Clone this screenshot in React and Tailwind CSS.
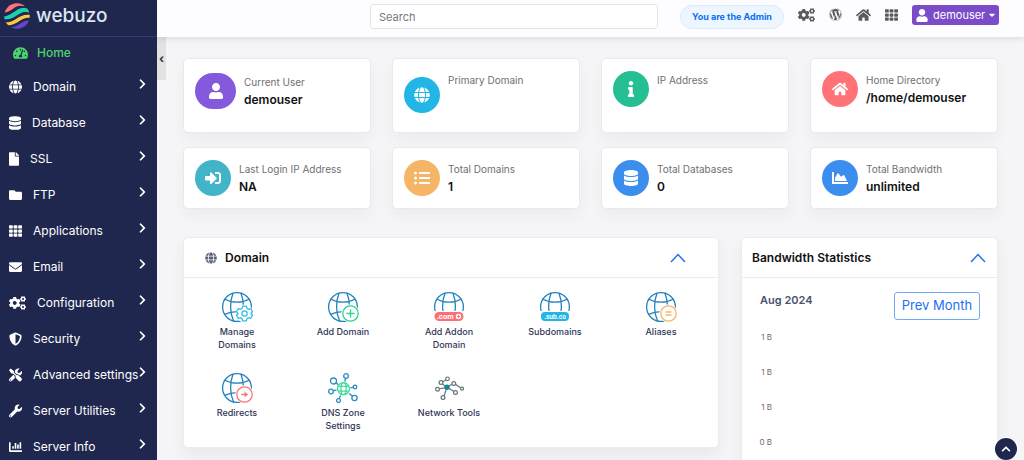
import React from "react";
import {
  FaTachometerAlt,
  FaGlobe,
  FaDatabase,
  FaFile,
  FaFolder,
  FaTh,
  FaEnvelope,
  FaCogs,
  FaShieldAlt,
  FaTools,
  FaWrench,
  FaChartBar,
  FaChevronRight,
  FaChevronUp,
  FaWordpress,
  FaHome,
  FaUser,
  FaInfo,
  FaSignInAlt,
  FaListUl,
  FaChartArea,
  FaCaretDown,
} from "react-icons/fa";

const menu = [
  { label: "Domain", Icon: FaGlobe, width: "w-[13px]" },
  { label: "Database", Icon: FaDatabase, width: "w-3" },
  { label: "SSL", Icon: FaFile, width: "w-2.5" },
  { label: "FTP", Icon: FaFolder, width: "w-[13px]" },
  { label: "Applications", Icon: FaTh, width: "w-[13px]" },
  { label: "Email", Icon: FaEnvelope, width: "w-[13px]" },
  { label: "Configuration", Icon: FaCogs, width: "w-[17px]" },
  { label: "Security", Icon: FaShieldAlt, width: "w-[13px]" },
  { label: "Advanced settings", Icon: FaTools, width: "w-[13px]" },
  { label: "Server Utilities", Icon: FaWrench, width: "w-[13px]" },
  { label: "Server Info", Icon: FaChartBar, width: "w-[13px]" },
];

const stats = [
  { label: "Current User", value: "demouser", Icon: FaUser, card: "pt-[14px]", badge: "w-[41px] bg-[#8459dc]" },
  { label: "Primary Domain", value: "", Icon: FaGlobe, card: "pt-3", badge: "mt-1.5 w-9 bg-[#22b6e6]" },
  { label: "IP Address", value: "", Icon: FaInfo, card: "pt-3", badge: "w-9 bg-[#26bf94]" },
  { label: "Home Directory", value: "/home/demouser", Icon: FaHome, card: "pt-3", badge: "w-9 bg-[#ff7378]" },
  { label: "Last Login IP Address", value: "NA", Icon: FaSignInAlt, card: "pt-3", badge: "w-9 bg-[#41b4c8]" },
  { label: "Total Domains", value: "1", Icon: FaListUl, card: "pt-3", badge: "w-9 bg-[#f4b566]" },
  { label: "Total Databases", value: "0", Icon: FaDatabase, card: "pt-3", badge: "w-9 bg-[#3b8eed]" },
  { label: "Total Bandwidth", value: "unlimited", Icon: FaChartArea, card: "pt-3", badge: "w-9 bg-[#3b8eed]" },
];

function Logo() {
  return (
    <svg viewBox="0 0 26 26" className="size-[26px]" fill="none" aria-hidden="true">
      <defs>
        <clipPath id="logo-disc">
          <circle cx="13" cy="13" r="12.8" />
        </clipPath>
      </defs>
      <g clipPath="url(#logo-disc)">
        <path d="M0 9.500C6 9 8.500 5.800 12 3.800C15 2.200 18 2.600 21 3.400L16 -1H4Z" fill="#f9767b" />
        <path d="M-1 13.500C5 13 9 9.500 13 7C17 4.600 21 4.400 26 6.500V10C20 7.600 17 9.600 13.500 12C9 15 5 17.300 -1 16Z" fill="#1fd1ab" />
        <path d="M0 19.500C6 19.600 10 17.500 13.500 15C17.500 12.300 21 11 27 12V15C22 14 19 15.600 15.500 18C11 21 7 23 1 22Z" fill="#fdc640" />
        <path d="M4 24.500C9 24.600 13 22.700 16.500 20.400C19.500 18.500 22 17.300 26 17.600L22 27H6Z" fill="#6445cd" />
      </g>
    </svg>
  );
}

function Globe({ children }) {
  return (
    <svg viewBox="0 0 30 30" className="size-[30px] overflow-visible" fill="none" strokeLinecap="round" aria-hidden="true">
      <g stroke="#2383bd" strokeWidth="1.300">
        <circle cx="15" cy="15" r="14.400" />
        <path d="M11 1.300C7.700 9.500 7.700 20.500 11.500 28.800M19 1.300C22.300 9.500 22.300 20.500 18.500 28.800" />
        <path d="M3 7.200C10 11.200 20 11.200 27 7.200M2.700 22.400C10 18.800 20 18.800 27.300 22.400" />
      </g>
      {children}
    </svg>
  );
}

function RoundBadge({ color, children }) {
  return (
    <g>
      <circle cx="22.500" cy="21.500" r="9.300" fill="#fff" />
      <circle cx="22.500" cy="21.500" r="7.700" stroke={color} strokeWidth="1.300" />
      <g stroke={color} strokeWidth="1.300">{children}</g>
    </g>
  );
}

function ManageIcon() {
  return (
    <Globe>
      <circle cx="22.500" cy="21.500" r="9" fill="#fff" />
      <g stroke="#35bde8" strokeWidth="1.300" strokeLinejoin="round">
        <path d="M20.700 14.200h3.600l.7 2.200 1.500.9 2.300-.6 1.700 3-1.600 1.800 1.600 1.800-1.700 3-2.300-.6-1.500.9-.7 2.200h-3.600l-.7-2.200-1.500-.9-2.300.6-1.700-3 1.600-1.800-1.600-1.800 1.700-3 2.300.6 1.500-.9z" />
        <circle cx="22.500" cy="21.500" r="2.600" />
      </g>
    </Globe>
  );
}

function AddDomainIcon() {
  return (
    <Globe>
      <RoundBadge color="#2fd393">
        <path d="M22.500 18v7M19 21.500h7" />
      </RoundBadge>
    </Globe>
  );
}

function AddonIcon() {
  return (
    <Globe>
      <rect x="-1" y="19" width="32" height="14" fill="#fff" />
      <rect x="0.500" y="20" width="29" height="9" rx="4.500" fill="#fc6f76" />
      <text x="2.500" y="26.500" fill="#fff" fontSize="7" fontWeight="700">.com</text>
      <circle cx="24.500" cy="24.500" r="2.700" fill="#fff" />
      <path d="M23.200 24.500h2.600M24.500 23.200v2.600" stroke="#fc6f76" strokeWidth="0.900" />
    </Globe>
  );
}

function SubdomainIcon() {
  return (
    <Globe>
      <rect x="-1" y="19" width="32" height="14" fill="#fff" />
      <rect x="1" y="20" width="28" height="9" rx="4" fill="#25b5e2" />
      <text x="15" y="26.500" textAnchor="middle" fill="#fff" fontSize="6" fontWeight="700">.sub.co</text>
    </Globe>
  );
}

function AliasIcon() {
  return (
    <Globe>
      <RoundBadge color="#f9b566">
        <path d="M20 20h5M20 23h5" />
      </RoundBadge>
    </Globe>
  );
}

function RedirectIcon() {
  return (
    <Globe>
      <RoundBadge color="#fb7379">
        <path d="M19.800 21.500h5.200" />
        <path d="M23 19.300l2.600 2.200-2.600 2.200z" fill="#fb7379" strokeWidth="0.500" />
      </RoundBadge>
    </Globe>
  );
}

function DnsIcon() {
  return (
    <svg viewBox="0 0 30 30" className="size-[30px]" fill="none" aria-hidden="true">
      <g stroke="#2c8cc0" strokeWidth="1.300">
        <circle cx="5.500" cy="8" r="3" />
        <circle cx="18" cy="3" r="2.300" />
        <circle cx="27" cy="14" r="1.800" />
        <circle cx="26.500" cy="25" r="2.600" />
        <circle cx="10.500" cy="27.500" r="1.900" />
        <circle cx="3" cy="18.500" r="2.300" />
        <path d="M8 9.800l2.300 1.900M17.500 5.500l-.7 3M25 14.300l-2.700.5M24.500 23.200l-3.200-2.700M11.200 25.600l1.300-3.200M5.200 17.800l3.300-.9" />
      </g>
      <g stroke="#3fdc9c" strokeWidth="1.300">
        <circle cx="15.500" cy="15.700" r="6" />
        <ellipse cx="15.500" cy="15.700" rx="2.600" ry="6" />
        <path d="M10.200 13.300h10.600M10.200 18.100h10.600" />
      </g>
    </svg>
  );
}

function NetworkIcon() {
  return (
    <svg viewBox="0 0 30 30" className="size-[30px]" fill="none" aria-hidden="true">
      <g stroke="#66757a" strokeWidth="1.200">
        <path d="M13 14.300L7.500 10.500M13 14.300L4.500 16M13 14.300L10 23M13 14.300l7 4.300M13 14.300l5-3M9 8.800l3-2M21.800 11.500l4.700 3.300" />
        <circle cx="7" cy="9.500" r="1.900" fill="#fff" />
        <circle cx="13.500" cy="5.800" r="1.800" fill="#fff" />
        <circle cx="3.500" cy="16.300" r="1.900" fill="#fff" />
        <circle cx="9" cy="24.500" r="1.900" fill="#fff" />
        <circle cx="19.800" cy="10.500" r="1.900" fill="#fff" />
        <circle cx="28" cy="15.700" r="1.500" fill="#fff" />
        <circle cx="21.500" cy="19.500" r="1.900" fill="#fff" />
      </g>
      <circle cx="13" cy="14.300" r="2.700" fill="#138a93" />
    </svg>
  );
}

const domainTools = [
  { label: "Manage Domains", Icon: ManageIcon },
  { label: "Add Domain", Icon: AddDomainIcon },
  { label: "Add Addon Domain", Icon: AddonIcon },
  { label: "Subdomains", Icon: SubdomainIcon },
  { label: "Aliases", Icon: AliasIcon },
  { label: "Redirects", Icon: RedirectIcon },
  { label: "DNS Zone Settings", Icon: DnsIcon },
  { label: "Network Tools", Icon: NetworkIcon },
];

function CollapseButton({ label }) {
  return (
    <button type="button" aria-label={label} className="ml-auto text-[#1f6cf0]">
      <svg viewBox="0 0 16 10" className="h-2.5 w-4" fill="none" stroke="currentColor" strokeWidth="1.400" aria-hidden="true">
        <path d="M1 9l7-7.500L15 9" />
      </svg>
    </button>
  );
}

function Sidebar() {
  return (
    <aside className="flex w-[157px] shrink-0 flex-col overflow-hidden bg-[#20274e] text-white">
      <a href="#home" className="flex h-[37px] shrink-0 items-center gap-1.5 border-b border-[#333c70] pb-1 pl-1">
        <Logo />
        <span className="text-[19px] leading-6 font-medium text-[#dde6f0]">webuzo</span>
      </a>
      <nav className="text-[12px] leading-4">
        <a href="#home" className="flex h-8 items-center gap-[9px] pl-[13px] font-medium text-[#4bd66c]">
          <FaTachometerAlt className="h-[14px] w-[15px]" />
          Home
        </a>
        {menu.map(({ label, Icon, width }) => (
          <button key={label} type="button" className="flex h-9 w-full items-center pr-[11px] pl-[9px] whitespace-nowrap">
            <Icon className={`mr-[11px] h-[14px] shrink-0 ${width}`} />
            {label}
            <FaChevronRight className="mb-1.5 ml-auto h-3 w-[7px] shrink-0" />
          </button>
        ))}
      </nav>
    </aside>
  );
}

function Header() {
  return (
    <header className="z-10 flex h-[37px] shrink-0 items-start justify-end bg-[#fdfdff] pt-1 pr-[25px] shadow-[0_2px_6px_rgba(0,0,0,0.1)]">
      <input
        type="search"
        aria-label="Search"
        placeholder="Search"
        className="h-[25px] w-72 rounded-[3px] border border-[#e2e4e8] bg-white px-2 text-[11px] text-gray-700 placeholder:text-[#75777b]"
      />
      <span className="mt-px ml-[22px] flex h-6 w-[104px] items-center justify-center rounded-full border border-[#dcebfa] bg-[#edf6fe] text-[9px] font-bold whitespace-nowrap text-[#0b6ff2]">
        You are the Admin
      </span>
      <div className="ml-[14px] flex h-[21px] items-center gap-[14px] text-[#5a5a5c]">
        <a href="#settings" aria-label="Settings"><FaCogs className="h-[14px] w-[17px]" /></a>
        <a href="#wordpress" aria-label="WordPress"><FaWordpress className="size-[13px]" /></a>
        <a href="#home" aria-label="Home"><FaHome className="h-[14px] w-[15px]" /></a>
        <a href="#apps" aria-label="Applications"><FaTh className="h-[14px] w-[13px]" /></a>
      </div>
      <button type="button" className="mt-px ml-[14px] flex h-5 w-[87px] items-center rounded-[3px] bg-[#7a4cc8] pl-1 text-[11px] text-white">
        <FaUser className="h-[13px] w-3" />
        <span className="ml-[5px]">demouser</span>
        <FaCaretDown className="ml-1 h-[10px] w-1.5" />
      </button>
    </header>
  );
}

function StatCard({ label, value, Icon, card, badge }) {
  return (
    <section className={`flex items-start gap-2 rounded-[5px] border border-[#e9e9ec] bg-white pr-1 pb-2 pl-[11px] shadow-[0_8px_16px_rgba(0,0,0,0.04)] ${card}`}>
      <span className={`flex h-9 shrink-0 items-center justify-center rounded-full text-white ${badge}`}>
        <Icon className="size-4" />
      </span>
      <div className="whitespace-nowrap">
        <h2 className="text-[10px] leading-[18px] text-[#707070]">{label}</h2>
        <p className="text-[12px] leading-[18px] font-semibold text-[#111]">{value}</p>
      </div>
    </section>
  );
}

export default function App() {
  return (
    <div className="flex h-screen overflow-hidden bg-[#f5f5f8] font-['Inter',sans-serif]">
      <Sidebar />
      <div className="flex min-w-0 flex-1 flex-col">
        <Header />
        <div className="flex min-h-0 flex-1 items-start">
          <button type="button" aria-label="Toggle sidebar" className="flex h-[43px] w-[9px] shrink-0 items-center justify-center bg-[#e2e2e2] text-[12px] font-bold text-[#333]">
            ‹
          </button>
          <main className="h-full min-w-0 flex-1 overflow-y-auto pt-[21px] pr-[26px] pl-[17px] [scrollbar-width:none]">
            <div className="grid grid-cols-4 grid-rows-[75px_62px] gap-x-[21px] gap-y-[14px]">
              {stats.map((s) => (
                <StatCard key={s.label} {...s} />
              ))}
            </div>
            <div className="mt-7 grid grid-cols-[536fr_257fr] items-start gap-[22px]">
              <section className="rounded-[5px] border border-[#ececef] bg-white shadow-[0_8px_16px_rgba(0,0,0,0.05)]">
                <div className="flex h-10 items-center border-b border-[#ebebed] pr-8 pl-[21px]">
                  <FaGlobe className="size-3 text-[#5b607a]" />
                  <h2 className="ml-2 text-[12px] font-semibold text-[#111]">Domain</h2>
                  <CollapseButton label="Collapse Domain" />
                </div>
                <div className="grid grid-cols-5 gap-y-[17px] pt-[14px] pr-1 pb-2.5">
                  {domainTools.map(({ label, Icon }) => (
                    <a key={label} href="#tool" className="flex h-16 flex-col items-center gap-[3px] text-center text-[9px] leading-[13px] font-medium text-[#2f3556]">
                      <Icon />
                      <span className="max-w-[68px]">{label}</span>
                    </a>
                  ))}
                </div>
              </section>
              <section className="rounded-[5px] border border-[#ececef] bg-white shadow-[0_8px_16px_rgba(0,0,0,0.05)]">
                <div className="flex h-10 items-center border-b border-[#ebebed] pr-[11px] pl-2.5">
                  <h2 className="text-[12px] font-semibold whitespace-nowrap text-[#111]">Bandwidth Statistics</h2>
                  <CollapseButton label="Collapse Bandwidth Statistics" />
                </div>
                <div className="pt-[14px] pr-[17px] pb-4 pl-[18px]">
                  <div className="flex items-start justify-between">
                    <h3 className="text-[11px] leading-4 font-semibold text-[#4c5372]">Aug 2024</h3>
                    <button type="button" className="h-7 w-[86px] rounded-[3px] border border-[#73a9fb] text-[13px] whitespace-nowrap text-[#1d70f5]">
                      Prev Month
                    </button>
                  </div>
                  <ul className="flex w-3 flex-col items-end text-[8px] leading-[35px] whitespace-nowrap text-[#6b6b6b]">
                    {["1 B", "1 B", "1 B", "0 B"].map((tick, i) => (
                      <li key={i}>{tick}</li>
                    ))}
                  </ul>
                </div>
              </section>
            </div>
          </main>
        </div>
      </div>
      <button type="button" aria-label="Back to top" className="fixed right-[7px] bottom-0 z-20 flex size-[22px] items-center justify-center rounded-full bg-[#20274e] text-white ring-1 ring-white">
        <FaChevronUp className="size-2.5" />
      </button>
    </div>
  );
}
